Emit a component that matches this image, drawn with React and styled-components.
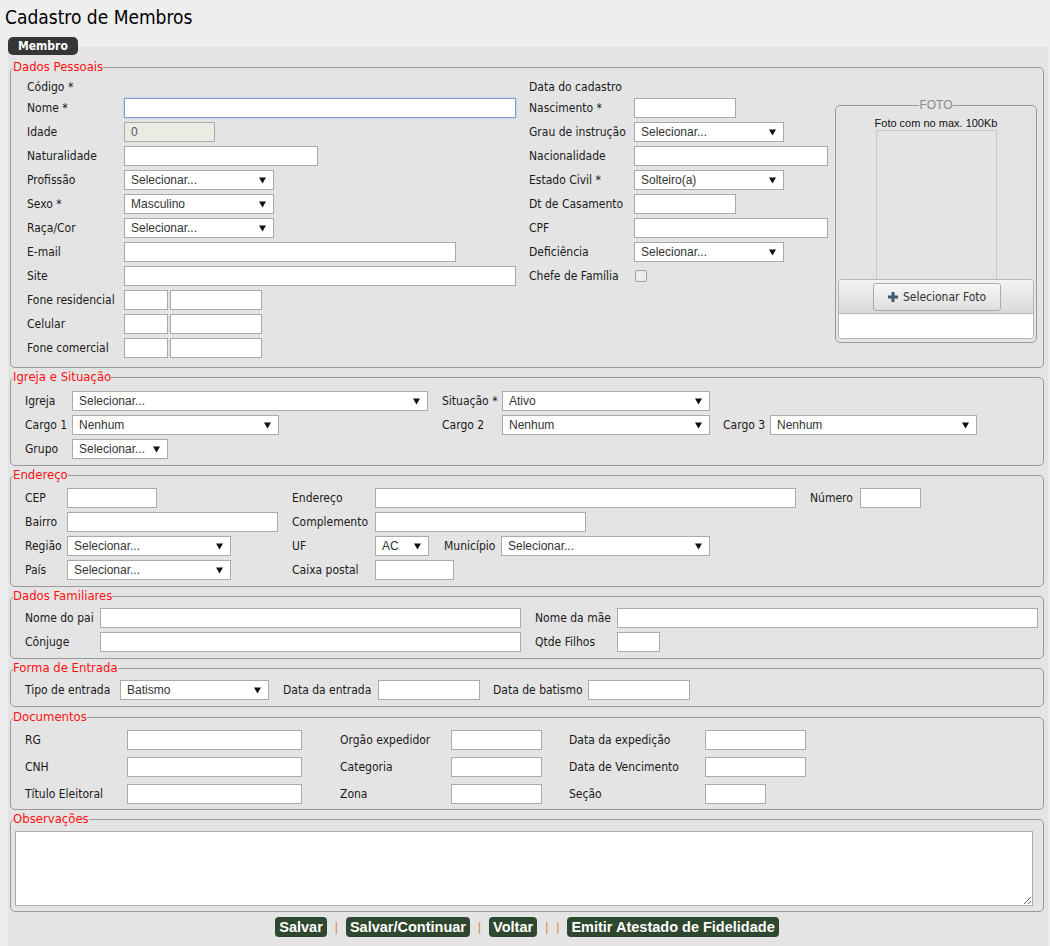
import styled, { createGlobalStyle } from "styled-components";

const labelFont = `"DejaVu Sans Condensed", "DejaVu Sans", sans-serif`;
const arial = `"Liberation Sans", Arial, sans-serif`;

const GlobalStyle = createGlobalStyle`
  body {
    margin: 0;
    background: #eeeeee;
    font-family: ${labelFont};
    font-size: 12px;
    color: #1a1a1a;
  }
`;

const Page = styled.div`
  padding: 0 2px 0 0;
`;

const Title = styled.h1`
  margin: 0;
  padding: 6px 5px 9px;
  font-family: ${labelFont};
  font-size: 19px;
  font-weight: normal;
  color: #000;
  line-height: 22px;
`;

const TabBar = styled.div`
  display: flex;
  padding-left: 8px;
  position: relative;
  z-index: 1;
  margin-bottom: -8px;
`;

const Tab = styled.div`
  background: #363636;
  color: #fff;
  font-weight: bold;
  font-size: 12px;
  line-height: 18px;
  padding: 0 10px;
  border-radius: 5px;
`;

const Panel = styled.div`
  margin-left: 8px;
  background: #e4e4e4;
  padding: 12px 4px 12px 2px;
`;

const Fieldset = styled.fieldset`
  margin: ${(p) => p.$mt ?? 0}px 0 1px;
  padding: ${(p) => p.$pad || "4px 0 5px 14px"};
  border: 1px solid #9a9a9a;
  border-radius: 5px;
  min-width: 0;
`;

const Legend = styled.legend`
  color: #ff1010;
  font-size: 13px;
  line-height: 16px;
  padding: 0;
  margin-left: ${(p) => p.$shift ?? -12}px;
`;

const Label = styled.span`
  white-space: nowrap;
  color: #1a1a1a;
`;

const TextInput = styled.input`
  box-sizing: border-box;
  width: ${(p) => p.$w}px;
  height: 20px;
  border: 1px solid ${(p) => (p.$focus ? "#7d9fd6" : "#aaa")};
  box-shadow: ${(p) => (p.$focus ? "0 0 2px #9bb8e6" : "none")};
  background: ${(p) => (p.disabled ? "#ebebe4" : "#fff")};
  color: #555;
  font-family: ${arial};
  font-size: 12px;
  padding: 0 6px;
  margin: 0;
  outline: none;
`;

const SelectBox = styled.div`
  box-sizing: border-box;
  width: ${(p) => p.$w}px;
  height: 20px;
  border: 1px solid #aaa;
  background: #fff;
  display: flex;
  align-items: center;
  justify-content: space-between;
  padding: 0 7px 0 6px;
  font-family: ${arial};
  font-size: 12px;
  color: #333;
`;

const Arrow = () => (
  <svg width="7" height="7" viewBox="0 0 7 7">
    <path d="M0 0.5h7L3.5 6.5z" fill="#111" />
  </svg>
);

const Select = ({ w, children }) => (
  <SelectBox $w={w}>
    <span>{children}</span>
    <Arrow />
  </SelectBox>
);

const Check = styled.span`
  box-sizing: border-box;
  width: 12px;
  height: 12px;
  border: 1px solid #a0a0a0;
  border-radius: 2px;
  background: #ececec;
  margin-left: 1px;
`;

const Grid = styled.div`
  display: grid;
  grid-template-columns: ${(p) => p.$cols};
  grid-auto-rows: 20px;
  row-gap: ${(p) => p.$gap ?? 4}px;
  align-items: center;
`;

const Inline = styled.div`
  display: flex;
  align-items: center;
  gap: ${(p) => p.$gap ?? 0}px;
`;

const Wide = styled.div`
  grid-column: ${(p) => p.$span || "1 / -1"};
  display: flex;
  align-items: center;
  gap: ${(p) => p.$gap ?? 0}px;
`;

const FixedLabel = styled(Label)`
  display: inline-block;
  width: ${(p) => p.$w}px;
  margin-left: ${(p) => p.$ml ?? 0}px;
`;

/* Dados pessoais */
const PessoaisBody = styled.div`
  display: flex;
  align-items: flex-start;
`;

const PessoaisGrid = styled(Grid)`
  grid-template-rows: 19px;
`;

const TopLabel = styled(Wide)`
  align-self: end;
`;

const LeftCol = styled.div`
  width: 489px;
`;

const RightCol = styled.div`
  width: 299px;
  margin-left: 13px;
`;

const PhotoSet = styled.fieldset`
  box-sizing: border-box;
  width: 202px;
  margin: 23px 0 0 7px;
  padding: 0 2px 3px 2px;
  border: 1px solid #9a9a9a;
  border-radius: 5px;
  display: flex;
  flex-direction: column;
  align-items: center;
  min-width: 0;
`;

const PhotoLegend = styled.legend`
  margin: 0 auto;
  padding: 0;
  color: #8a8a8a;
  font-family: ${arial};
  font-size: 12px;
  line-height: 14px;
`;

const PhotoHint = styled.div`
  font-family: ${arial};
  font-size: 11px;
  color: #111;
  line-height: 13px;
  text-align: center;
  margin-top: 5px;
`;

const PhotoFrame = styled.div`
  box-sizing: border-box;
  width: 121px;
  height: 150px;
  border: 1px solid #c8c8c8;
`;

const Uploader = styled.div`
  box-sizing: border-box;
  width: 196px;
  border: 1px solid #b5b5b5;
  border-radius: 4px;
  overflow: hidden;
  margin-top: -1px;
`;

const UploadBar = styled.div`
  height: 33px;
  background: linear-gradient(#f3f3f3, #d9d9d9);
  border-bottom: 1px solid #b5b5b5;
  display: flex;
  align-items: center;
  justify-content: center;
`;

const UploadButton = styled.div`
  box-sizing: border-box;
  width: 128px;
  height: 28px;
  border: 1px solid #aaa;
  border-radius: 3px;
  background: linear-gradient(#f7f7f7, #dedede);
  display: flex;
  align-items: center;
  justify-content: center;
  gap: 5px;
  color: #333;
  font-size: 12px;
  margin-left: 2px;
`;

const UploadList = styled.div`
  height: 24px;
  background: #fff;
`;

const Plus = () => (
  <svg width="10" height="10" viewBox="0 0 10 10">
    <path d="M3.5 0h3v3.5H10v3H6.5V10h-3V6.5H0v-3h3.5z" fill="#3f5b6b" />
  </svg>
);

/* Observações */
const Notes = styled.textarea`
  box-sizing: border-box;
  display: block;
  width: calc(100% - 10px);
  height: 75px;
  border: 1px solid #aaa;
  background: #fff;
  margin: 0;
`;

/* Buttons */
const Actions = styled.div`
  display: flex;
  justify-content: center;
  align-items: center;
  padding-top: 4px;
  gap: 8px;
`;

const ActionButton = styled.button`
  height: 20px;
  padding: 0 4px;
  border: none;
  border-radius: 4px;
  background: #2f472f;
  color: #fff;
  font-family: ${arial};
  font-weight: bold;
  font-size: 14.5px;
  line-height: 20px;
`;

const Sep = styled.span`
  color: #d08a3a;
  font-family: ${arial};
  font-size: 12px;
`;

function DadosPessoais() {
  return (
    <Fieldset $pad="0 0 9px 16px">
      <Legend $shift={-14}>Dados Pessoais</Legend>
      <PessoaisBody>
        <LeftCol>
          <PessoaisGrid $cols="97px 392px">
            <TopLabel><Label>Código *</Label></TopLabel>
            <Label>Nome *</Label>
            <TextInput $w={392} $focus />
            <Label>Idade</Label>
            <TextInput $w={91} disabled value="0" readOnly />
            <Label>Naturalidade</Label>
            <TextInput $w={194} />
            <Label>Profissão</Label>
            <Select w={150}>Selecionar...</Select>
            <Label>Sexo *</Label>
            <Select w={150}>Masculino</Select>
            <Label>Raça/Cor</Label>
            <Select w={150}>Selecionar...</Select>
            <Label>E-mail</Label>
            <TextInput $w={332} />
            <Label>Site</Label>
            <TextInput $w={392} />
            <Label>Fone residencial</Label>
            <Inline $gap={2}><TextInput $w={44} /><TextInput $w={92} /></Inline>
            <Label>Celular</Label>
            <Inline $gap={2}><TextInput $w={44} /><TextInput $w={92} /></Inline>
            <Label>Fone comercial</Label>
            <Inline $gap={2}><TextInput $w={44} /><TextInput $w={92} /></Inline>
          </PessoaisGrid>
        </LeftCol>
        <RightCol>
          <PessoaisGrid $cols="105px 194px">
            <TopLabel><Label>Data do cadastro</Label></TopLabel>
            <Label>Nascimento *</Label>
            <TextInput $w={102} />
            <Label>Grau de instrução</Label>
            <Select w={150}>Selecionar...</Select>
            <Label>Nacionalidade</Label>
            <TextInput $w={194} />
            <Label>Estado Civil *</Label>
            <Select w={150}>Solteiro(a)</Select>
            <Label>Dt de Casamento</Label>
            <TextInput $w={102} />
            <Label>CPF</Label>
            <TextInput $w={194} />
            <Label>Deficiência</Label>
            <Select w={150}>Selecionar...</Select>
            <Label>Chefe de Família</Label>
            <Check />
          </PessoaisGrid>
        </RightCol>
        <PhotoSet>
          <PhotoLegend>FOTO</PhotoLegend>
          <PhotoHint>Foto com no max. 100Kb</PhotoHint>
          <PhotoFrame />
          <Uploader>
            <UploadBar>
              <UploadButton>
                <Plus />
                Selecionar Foto
              </UploadButton>
            </UploadBar>
            <UploadList />
          </Uploader>
        </PhotoSet>
      </PessoaisBody>
    </Fieldset>
  );
}

function IgrejaSituacao() {
  return (
    <Fieldset $pad="6px 0 6px 14px">
      <Legend>Igreja e Situação</Legend>
      <Grid $cols="47px 370px 60px 221px 47px 207px">
        <Label>Igreja</Label>
        <Select w={356}>Selecionar...</Select>
        <Label>Situação *</Label>
        <Select w={208}>Ativo</Select>
        <span />
        <span />
        <Label>Cargo 1</Label>
        <Select w={207}>Nenhum</Select>
        <Label>Cargo 2</Label>
        <Select w={208}>Nenhum</Select>
        <Label>Cargo 3</Label>
        <Select w={207}>Nenhum</Select>
        <Label>Grupo</Label>
        <Select w={96}>Selecionar...</Select>
      </Grid>
    </Fieldset>
  );
}

function Endereco() {
  return (
    <Fieldset $pad="5px 0 6px 14px">
      <Legend>Endereço</Legend>
      <Grid $cols="42px 225px 83px auto">
        <Label>CEP</Label>
        <TextInput $w={90} />
        <Label>Endereço</Label>
        <Wide $span="auto">
          <TextInput $w={421} />
          <FixedLabel $w={50} $ml={14}>Número</FixedLabel>
          <TextInput $w={61} />
        </Wide>
        <Label>Bairro</Label>
        <TextInput $w={211} />
        <Label>Complemento</Label>
        <TextInput $w={211} />
        <Label>Região</Label>
        <Select w={164}>Selecionar...</Select>
        <Label>UF</Label>
        <Wide $span="auto">
          <Select w={54}>AC</Select>
          <FixedLabel $w={57} $ml={15}>Município</FixedLabel>
          <Select w={209}>Selecionar...</Select>
        </Wide>
        <Label>País</Label>
        <Select w={164}>Selecionar...</Select>
        <Label>Caixa postal</Label>
        <TextInput $w={79} />
      </Grid>
    </Fieldset>
  );
}

function DadosFamiliares() {
  return (
    <Fieldset $pad="4px 0 6px 14px">
      <Legend>Dados Familiares</Legend>
      <Grid $cols="75px 435px 82px 421px">
        <Label>Nome do pai</Label>
        <TextInput $w={421} />
        <Label>Nome da mãe</Label>
        <TextInput $w={421} />
        <Label>Cônjuge</Label>
        <TextInput $w={421} />
        <Label>Qtde Filhos</Label>
        <TextInput $w={43} />
      </Grid>
    </Fieldset>
  );
}

function FormaEntrada() {
  return (
    <Fieldset $pad="4px 0 6px 14px">
      <Legend>Forma de Entrada</Legend>
      <Inline>
        <FixedLabel $w={95}>Tipo de entrada</FixedLabel>
        <Select w={149}>Batismo</Select>
        <FixedLabel $w={95} $ml={14}>Data da entrada</FixedLabel>
        <TextInput $w={102} />
        <FixedLabel $w={95} $ml={13}>Data de batismo</FixedLabel>
        <TextInput $w={102} />
      </Inline>
    </Fieldset>
  );
}

function Documentos() {
  return (
    <Fieldset $mt={2} $pad="5px 0 5px 14px">
      <Legend>Documentos</Legend>
      <Grid $cols="102px 213px 111px 118px 136px 101px" $gap={7}>
        <Label>RG</Label>
        <TextInput $w={175} />
        <Label>Orgão expedidor</Label>
        <TextInput $w={91} />
        <Label>Data da expedição</Label>
        <TextInput $w={101} />
        <Label>CNH</Label>
        <TextInput $w={175} />
        <Label>Categoria</Label>
        <TextInput $w={91} />
        <Label>Data de Vencimento</Label>
        <TextInput $w={101} />
        <Label>Título Eleitoral</Label>
        <TextInput $w={175} />
        <Label>Zona</Label>
        <TextInput $w={91} />
        <Label>Seção</Label>
        <TextInput $w={61} />
      </Grid>
    </Fieldset>
  );
}

export default function App() {
  return (
    <Page>
      <GlobalStyle />
      <Title>Cadastro de Membros</Title>
      <TabBar>
        <Tab>Membro</Tab>
      </TabBar>
      <Panel>
        <DadosPessoais />
        <IgrejaSituacao />
        <Endereco />
        <DadosFamiliares />
        <FormaEntrada />
        <Documentos />
        <Fieldset $pad="4px 0 5px 4px">
          <Legend $shift={-2}>Observações</Legend>
          <Notes />
        </Fieldset>
        <Actions>
          <ActionButton>Salvar</ActionButton>
          <Sep>|</Sep>
          <ActionButton>Salvar/Continuar</ActionButton>
          <Sep>|</Sep>
          <ActionButton>Voltar</ActionButton>
          <Sep>|</Sep>
          <Sep>|</Sep>
          <ActionButton>Emitir Atestado de Fidelidade</ActionButton>
        </Actions>
      </Panel>
    </Page>
  );
}
